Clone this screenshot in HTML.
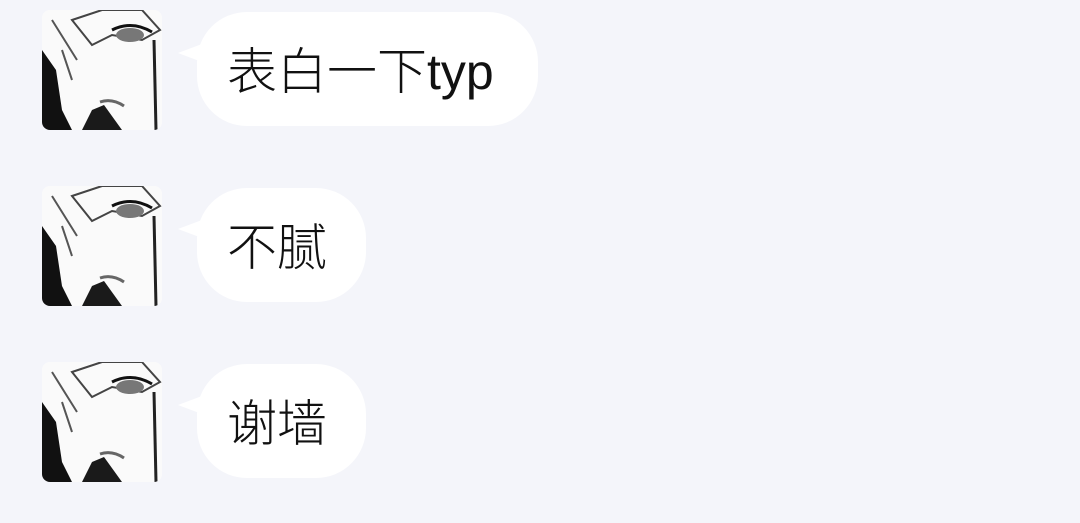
<!DOCTYPE html>
<html><head><meta charset="utf-8"><style>
body{margin:0;width:1080px;height:523px;background:#f4f5fa;position:relative;overflow:hidden;font-family:"Liberation Sans","Noto Sans CJK SC",sans-serif}
.av{position:absolute;left:42px;width:120px;height:120px;border-radius:8px;overflow:hidden;background:#fff}
.b{position:absolute;left:197px;height:114px;background:#fff;border-radius:50px;font-size:50px;color:#111;line-height:120px;padding-left:30px;box-sizing:border-box;font-weight:300}
.b span{font-weight:400}
.t{position:absolute;left:178px;width:0;height:0;border-top:9px solid transparent;border-bottom:9px solid transparent;border-right:24px solid #fff}
</style></head><body>
<svg width="0" height="0" style="position:absolute"><defs>
<g id="face">
<rect width="120" height="120" fill="#fafafa"/>
<path d="M0 40 L14 60 L20 100 L30 120 L0 120Z" fill="#111"/>
<path d="M40 120 L50 100 L62 95 L80 120Z" fill="#1a1a1a"/>
<path d="M30 10 L60 0 L100 0 L118 20 L100 30 L70 25 L50 35Z" fill="none" stroke="#444" stroke-width="2"/>
<ellipse cx="88" cy="25" rx="14" ry="7" fill="#777"/>
<path d="M70 20 Q90 10 110 22" stroke="#111" stroke-width="3" fill="none"/>
<path d="M58 92 Q70 88 82 96" stroke="#666" stroke-width="3" fill="none"/>
<path d="M112 30 L114 120" stroke="#222" stroke-width="3"/>
<path d="M20 40 L30 70 M10 10 L35 50" stroke="#555" stroke-width="2"/>
</g></defs></svg>
<div class="av" style="top:10px"><svg width="120" height="120"><use href="#face"/></svg></div>
<div class="av" style="top:186px"><svg width="120" height="120"><use href="#face"/></svg></div>
<div class="av" style="top:362px"><svg width="120" height="120"><use href="#face"/></svg></div>
<div class="t" style="top:44px"></div>
<div class="t" style="top:220px"></div>
<div class="t" style="top:396px"></div>
<div class="b" style="top:12px;width:341px">表白一下<span>typ</span></div>
<div class="b" style="top:188px;width:169px">不腻</div>
<div class="b" style="top:364px;width:169px">谢墙</div>
</body></html>
